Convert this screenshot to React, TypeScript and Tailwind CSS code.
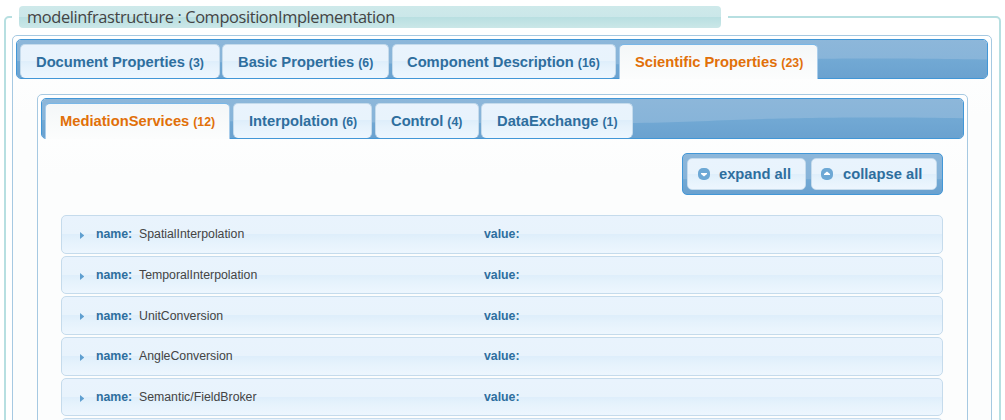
import React from "react";

type Tab = { title: string; count: number; size: string; active?: boolean };

const documentTabs: Tab[] = [
  { title: "Document Properties", count: 3, size: "w-[200px] mr-[2px] pl-[15px]" },
  { title: "Basic Properties", count: 6, size: "w-[167px] mr-[3px] pl-[15px]" },
  { title: "Component Description", count: 16, size: "w-[224px] mr-[3px] pl-[14px]" },
  { title: "Scientific Properties", count: 23, size: "w-[199px] pl-[15px]", active: true },
];

const scienceTabs: Tab[] = [
  { title: "MediationServices", count: 12, size: "w-[185px] mr-[3px] pl-[14px]", active: true },
  { title: "Interpolation", count: 6, size: "w-[139px] mr-[3px] pl-[15px]" },
  { title: "Control", count: 4, size: "w-[104px] mr-[2px] pl-[15px]" },
  { title: "DataExchange", count: 1, size: "w-[152px] pl-[15px]" },
];

const services = [
  { name: "SpatialInterpolation", size: "h-[39px] leading-[36px]" },
  { name: "TemporalInterpolation", size: "h-[38px] leading-[36px]" },
  { name: "UnitConversion", size: "h-[39px] leading-[38px]" },
  { name: "AngleConversion", size: "h-[39px] leading-[36px]" },
  { name: "Semantic/FieldBroker", size: "h-[38px] leading-[36px]" },
];

const glass =
  "bg-[linear-gradient(to_bottom,#e9f3fd_0%,#e8f3fc_49%,#deeefb_50%,#e5f2fc_68%,#edf6fe_100%)]";

function Wave({ viewBox }: { viewBox: string }) {
  return (
    <svg
      className="absolute inset-0 h-full w-full"
      viewBox={viewBox}
      preserveAspectRatio="none"
      aria-hidden="true"
    >
      <defs>
        <linearGradient id="waveTop" x1="0" y1="0" x2="0" y2="1">
          <stop offset="0" stopColor="#8db7da" />
          <stop offset="1" stopColor="#83b2d8" />
        </linearGradient>
        <linearGradient id="waveLow" x1="0" y1="0" x2="0" y2="1">
          <stop offset="0" stopColor="#72a9d4" />
          <stop offset="1" stopColor="#6aa1cf" />
        </linearGradient>
      </defs>
      <rect width="972" height="42" fill="url(#waveTop)" />
      <path
        d="M0 22 C130 22 240 24 380 24.5 C480 25 540 26 620 25 C700 23.5 740 19.5 860 19.5 C910 19.5 940 20 972 20.6 V42 H0 Z"
        fill="url(#waveLow)"
      />
    </svg>
  );
}

function TabBar({ tabs, height, viewBox }: { tabs: Tab[]; height: string; viewBox: string }) {
  return (
    <div className={`relative rounded-[5px] border border-[#4297d7] ${height}`}>
      <div className="absolute inset-0 overflow-hidden rounded-[4px]">
        <Wave viewBox={viewBox} />
      </div>
      <div className="relative flex h-full pl-[3px] pt-[4px]">
        {tabs.map((t) => (
          <div
            key={t.title}
            className={`flex shrink-0 items-baseline rounded-[5px] border pt-[6px] text-[14.72px] leading-[22px] font-bold whitespace-nowrap ${t.size} ${
              t.active
                ? "-mb-px rounded-b-none border-b-0 border-[#79b7e7] border-x-[#a9cdeb] bg-[linear-gradient(to_bottom,#f4f7f8,#fcfdfd)] text-[#e17009]"
                : `border-[#c5dbec] border-b-[#eef6fd] text-[#2e6e9e] ${glass}`
            }`}
          >
            <span>{t.title}</span>
            <span className="ml-[4px] text-[12.3px]">({t.count})</span>
          </div>
        ))}
      </div>
    </div>
  );
}

function CircleIcon({ up }: { up?: boolean }) {
  return (
    <svg width="12" height="12" viewBox="0 0 12 12" className="shrink-0" aria-hidden="true">
      <rect width="12" height="12" rx="5" fill="#6da8d5" />
      <path d={up ? "M3 7 V6 L6 3.4 L9 6 V7 Z" : "M3 5 H9 V6 L6 8.6 L3 6 Z"} fill="#fff" />
    </svg>
  );
}

export default function App() {
  return (
    <div className="h-[420px] w-[1005px] overflow-hidden bg-white pl-[4px] pt-[6px] font-['Liberation_Sans',Arial,sans-serif]">
      <fieldset className="h-[500px] w-[997px] min-w-0 rounded-[5px] border-2 border-[#b7dfe1] pl-[6px] pt-[7px]">
        <legend className="w-[716px] px-[7px]">
          <div className="h-[22px] rounded-[4px] bg-[linear-gradient(to_bottom,#cee9ea_0%,#cbe7e9_49%,#b8dfe1_50%,#cbe7e8_100%)] pl-[8px] font-['Open_Sans','Noto_Sans',sans-serif] text-[16.4px] leading-[21px] tracking-[-0.39px] whitespace-nowrap text-[#444]">
            modelinfrastructure : CompositionImplementation
          </div>
        </legend>

        <div className="h-[480px] w-[980px] rounded-[5px] border border-[#a6c9e2] bg-[linear-gradient(to_bottom,#ffffff_0px,#fcfdfd_80px)] p-[3px]">
          <TabBar tabs={documentTabs} height="h-[40px]" viewBox="1 1 970 38" />

          <div className="mt-[15px] ml-[21px] h-[420px] w-[931px] rounded-[5px] border border-[#a6c9e2] bg-[linear-gradient(to_bottom,#ffffff_0px,#fcfdfd_80px)] p-[3px]">
            <TabBar tabs={scienceTabs} height="h-[41px]" viewBox="26 1 921 39" />

            <div className="mt-[14px] mr-[21px] ml-auto h-[42px] w-[261px] rounded-[5px] border border-[#4297d7] bg-[linear-gradient(to_bottom,#8db7da_0%,#85b3d9_62%,#72a9d4_64%,#6aa1cf_100%)] p-[4px]">
              <div className="flex gap-[5px]">
                <button
                  className={`flex h-[32px] w-[119px] items-center rounded-[5px] border border-[#c5dbec] pl-[10px] text-[14.72px] font-bold text-[#2e6e9e] ${glass}`}
                >
                  <CircleIcon />
                  <span className="ml-[9px]">expand all</span>
                </button>
                <button
                  className={`flex h-[32px] w-[126px] items-center rounded-[5px] border border-[#c5dbec] pl-[9px] text-[14.72px] font-bold text-[#2e6e9e] ${glass}`}
                >
                  <CircleIcon up />
                  <span className="ml-[10px]">collapse all</span>
                </button>
              </div>
            </div>

            <div className="mt-[20px] ml-[20px] flex w-[882px] flex-col gap-[2px]">
              {services.map((s) => (
                <div
                  key={s.name}
                  className={`flex shrink-0 rounded-[5px] border border-[#c5dbec] pl-[18px] text-[12.3px] ${s.size} ${glass}`}
                >
                  <svg width="4" height="7" viewBox="0 0 4 7" className="mt-[16px] shrink-0" aria-hidden="true">
                    <path d="M0 0 L4.4 3.5 L0 7 Z" fill="#5f9fd0" />
                  </svg>
                  <div className="ml-[12px] flex w-[388px]">
                    <span className="w-[43px] font-bold text-[#2e6e9e]">name:</span>
                    <span className="text-[#444]">{s.name}</span>
                  </div>
                  <span className="font-bold text-[#2e6e9e]">value:</span>
                </div>
              ))}
              <div className={`h-[39px] shrink-0 rounded-[5px] border border-[#c5dbec] ${glass}`} />
            </div>
          </div>
        </div>
      </fieldset>
    </div>
  );
}
